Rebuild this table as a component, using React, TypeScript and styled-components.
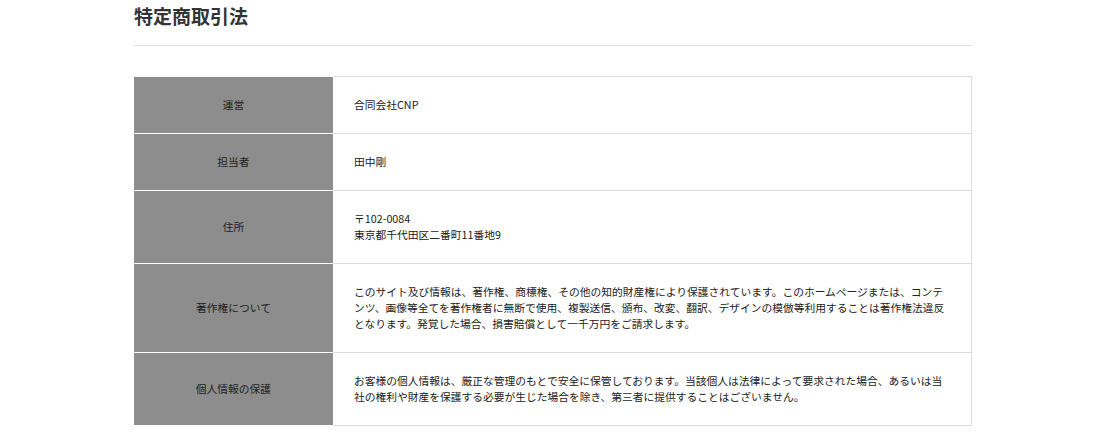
import styled, { createGlobalStyle } from "styled-components";

const GlobalStyle = createGlobalStyle`
  html, body {
    margin: 0;
    padding: 0;
    background: #fff;
  }
  body {
    font-family: "Noto Sans CJK JP", "Noto Sans", sans-serif;
    color: #333;
  }
`;

const Page = styled.div`
  padding: 0 127px 20px 133px;
`;

const Title = styled.h2`
  margin: 0 0 0 1px;
  padding: 3px 0 0;
  font-size: 19px;
  line-height: 26px;
  font-weight: 700;
  color: #333;
`;

const Divider = styled.hr`
  margin: 16px 0 30px 1px;
  border: none;
  border-top: 1px solid #ddd;
`;

const Table = styled.table`
  width: 100%;
  table-layout: fixed;
  border-collapse: collapse;
  font-size: 10.75px;
  line-height: 16px;
`;

const LabelCol = styled.col`
  width: 200px;
`;

const Head = styled.th`
  background: #8d8d8d;
  border: 1px solid #fff;
  font-weight: 400;
  color: #222;
  text-align: center;
  vertical-align: middle;
  padding: 20px 10px;
`;

const Cell = styled.td`
  border: 1px solid #ddd;
  padding: 20px 20px;
  color: #222;
  text-align: left;
`;

const rows: [string, string[]][] = [
  ["運営", ["合同会社CNP"]],
  ["担当者", ["田中剛"]],
  ["住所", ["〒102-0084", "東京都千代田区二番町11番地9"]],
  [
    "著作権について",
    [
      "このサイト及び情報は、著作権、商標権、その他の知的財産権により保護されています。このホームページまたは、コンテンツ、画像等全てを著作権者に無断で使用、複製送信、頒布、改変、翻訳、デザインの模倣等利用することは著作権法違反となります。発覚した場合、損害賠償として一千万円をご請求します。",
    ],
  ],
  [
    "個人情報の保護",
    [
      "お客様の個人情報は、厳正な管理のもとで安全に保管しております。当該個人は法律によって要求された場合、あるいは当社の権利や財産を保護する必要が生じた場合を除き、第三者に提供することはございません。",
    ],
  ],
];

export default function App() {
  return (
    <Page>
      <GlobalStyle />
      <Title>特定商取引法</Title>
      <Divider />
      <Table>
        <colgroup>
          <LabelCol />
          <col />
        </colgroup>
        <tbody>
          {rows.map(([label, lines]) => (
            <tr key={label}>
              <Head>{label}</Head>
              <Cell>
                {lines.map((l, i) => (
                  <div key={i}>{l}</div>
                ))}
              </Cell>
            </tr>
          ))}
        </tbody>
      </Table>
    </Page>
  );
}
